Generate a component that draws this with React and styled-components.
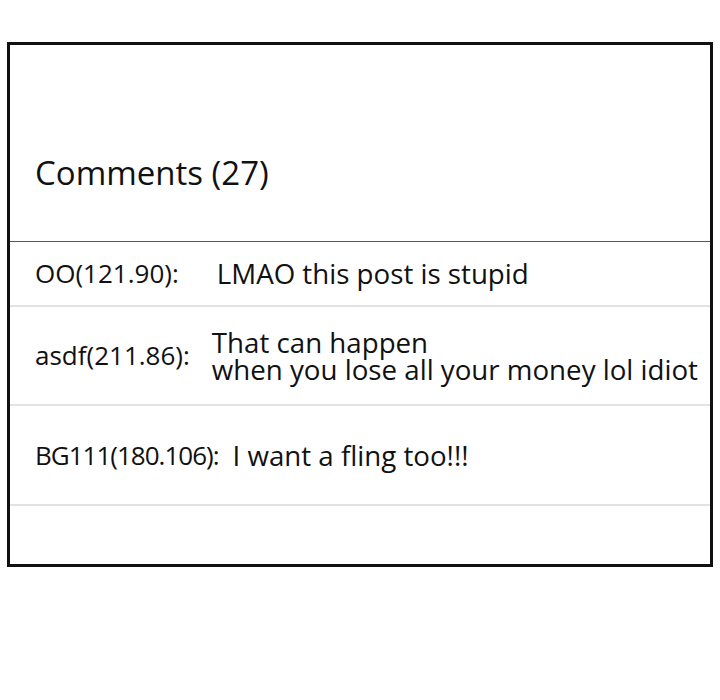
import React from "react";
import styled, { createGlobalStyle } from "styled-components";

const Global = createGlobalStyle`
  html, body { margin: 0; padding: 0; background: #fff; }
  body { font-family: "Open Sans", "Liberation Sans", sans-serif; color: #111; }
`;

const Page = styled.div`
  width: 720px;
  height: 700px;
  padding: 42px 0 0 7px;
  box-sizing: border-box;
`;

const Board = styled.section`
  width: 706px;
  height: 525px;
  box-sizing: border-box;
  border: 3px solid #111;
  display: flex;
  flex-direction: column;
`;

const Header = styled.div`
  height: 197px;
  box-sizing: border-box;
  display: flex;
  align-items: flex-end;
  padding: 0 0 48px 25px;
  border-bottom: 1.5px solid #4a5580;
`;

const Title = styled.h2`
  margin: 0;
  font-size: 33px;
  line-height: 40px;
  font-weight: 400;
  letter-spacing: 0;
`;

const Row = styled.div`
  height: ${(p) => p.$h}px;
  box-sizing: border-box;
  display: flex;
  align-items: center;
  gap: ${(p) => p.$gap}px;
  padding-left: 25px;
  border-bottom: ${(p) => (p.$last ? "none" : "2px solid #e2e2e2")};
  line-height: 27px;
`;

const Author = styled.span`
  white-space: nowrap;
  font-size: 26px;
  letter-spacing: ${(p) => p.$ls || 0}px;
`;

const Message = styled.span`
  white-space: pre-line;
  font-size: 27.7px;
`;

const comments = [
  { author: "OO(121.90):", text: "LMAO this post is stupid", h: 65, gap: 38 },
  {
    author: "asdf(211.86):",
    text: "That can happen\nwhen you lose all your money lol idiot",
    h: 99,
    gap: 22,
  },
  { author: "BG111(180.106):", text: "I want a fling too!!!", h: 100, gap: 14, ls: -1 },
];

export default function App() {
  return (
    <Page>
      <Global />
      <Board>
        <Header>
          <Title>Comments (27)</Title>
        </Header>
        {comments.map((c) => (
          <Row key={c.author} $h={c.h} $gap={c.gap}>
            <Author $ls={c.ls}>{c.author}</Author>
            <Message>{c.text}</Message>
          </Row>
        ))}
        <Row $h={58} $gap={0} $last />
      </Board>
    </Page>
  );
}
